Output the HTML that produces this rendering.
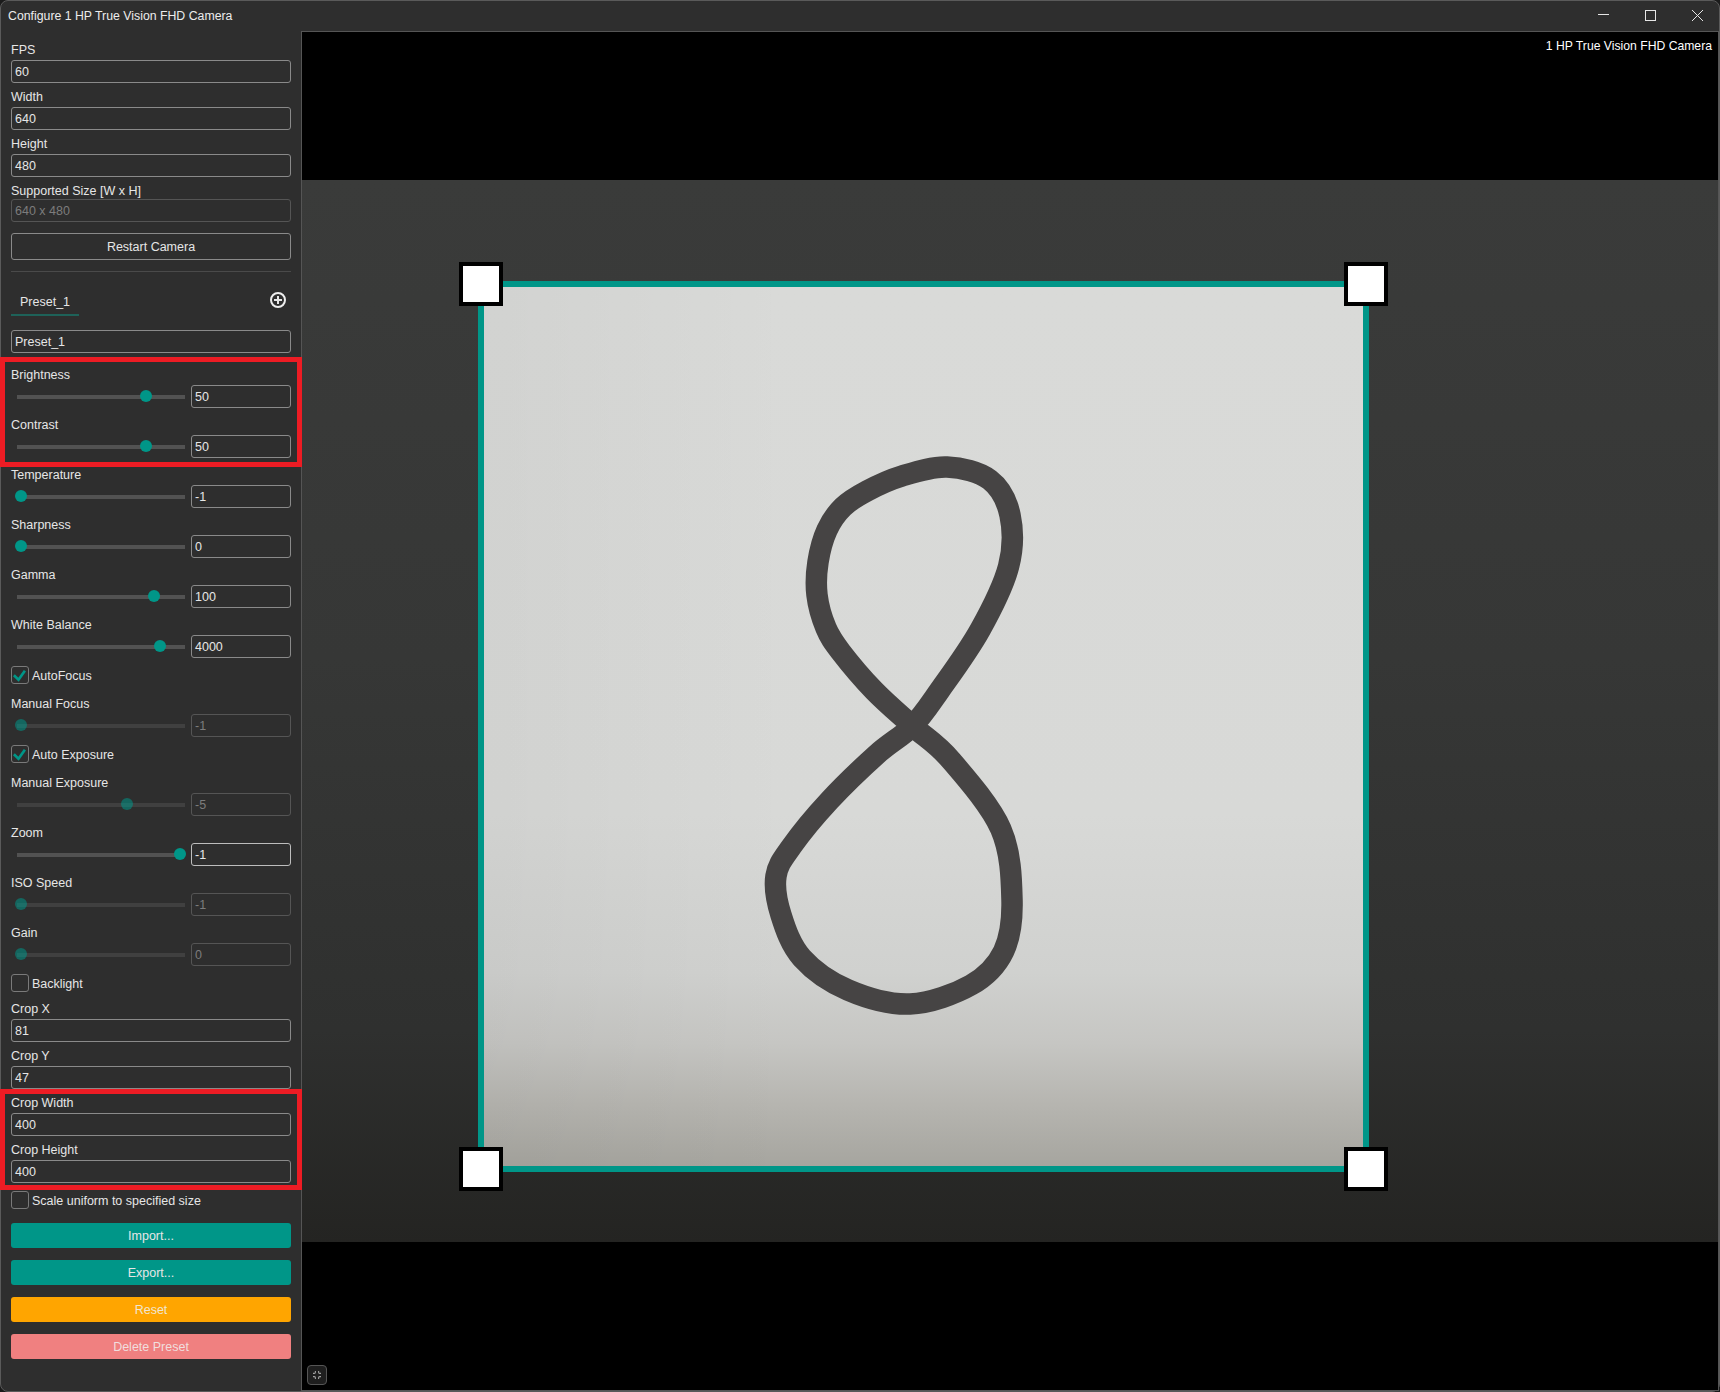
<!DOCTYPE html>
<html><head><meta charset="utf-8"><style>
html,body{margin:0;padding:0;width:1720px;height:1392px;overflow:hidden;background:#1b1b1b;}
body{position:relative;font-family:"Liberation Sans", sans-serif;}
.t{position:absolute;white-space:nowrap;font-family:"Liberation Sans", sans-serif;}
.b{position:absolute;}
</style></head><body>
<div class="b" style="left:0;top:0;width:1720px;height:1392px;background:#2e2e2e;border:1px solid #5a5a5a;border-radius:8px;box-sizing:border-box;overflow:hidden"></div><div class="t" style="left:8px;top:9.59px;font-size:12.3px;line-height:12.3px;color:#ececec;letter-spacing:0px;">Configure 1 HP True Vision FHD Camera</div><svg class="b" style="left:1590px;top:0" width="130" height="31" viewBox="1590 0 130 31"><line x1="1598" y1="14.5" x2="1609" y2="14.5" stroke="#e6e6e6" stroke-width="1"/><rect x="1645.5" y="10.5" width="10" height="10" fill="none" stroke="#e6e6e6" stroke-width="1"/><path d="M1692 10 L1703 21 M1703 10 L1692 21" stroke="#e6e6e6" stroke-width="1"/></svg><div class="b" style="left:301px;top:31px;width:1418px;height:1360px;background:#000;border:1px solid #555;box-sizing:border-box;"></div><svg class="b" style="left:302px;top:180px" width="1416" height="1062" viewBox="302 180 1416 1062">
<defs>
<linearGradient id="bgG" x1="0" y1="0" x2="0" y2="1">
<stop offset="0" stop-color="#3a3b3a"/><stop offset="0.45" stop-color="#363736"/><stop offset="0.8" stop-color="#2f302f"/><stop offset="1" stop-color="#242422"/>
</linearGradient>
<linearGradient id="paperG" x1="0" y1="0" x2="0" y2="1">
<stop offset="0" stop-color="#d9dad8"/><stop offset="0.6" stop-color="#d8d9d7"/><stop offset="0.78" stop-color="#d0d1cf"/><stop offset="0.86" stop-color="#c6c6c3"/><stop offset="0.93" stop-color="#b6b5b0"/><stop offset="1" stop-color="#a6a59f"/>
</linearGradient>
<linearGradient id="paperH" x1="0" y1="0" x2="1" y2="0"><stop offset="0" stop-color="#000" stop-opacity="0.035"/><stop offset="0.35" stop-color="#000" stop-opacity="0"/></linearGradient>
</defs>
<rect x="302" y="180" width="1416" height="1062" fill="url(#bgG)"/>
<rect x="484" y="287" width="879" height="879" fill="url(#paperG)"/>
<rect x="484" y="287" width="879" height="879" fill="url(#paperH)"/>
<path id="eight" d="M912.5,726 C925.3,737.6 936.0,742.8 950.7,760 C965.4,777.2 990.6,805.7 1000.8,829 C1011.0,852.3 1011.5,879.6 1012,900 C1012.5,920.4 1010.4,937.1 1003.6,951.3 C996.8,965.5 986.6,976.2 971,985 C955.4,993.8 930.5,1003.2 910,1004 C889.5,1004.8 866.0,997.7 848,990 C830.0,982.3 813.2,970.5 802,958 C790.8,945.5 785.3,928.7 781,915 C776.7,901.3 774.2,887.4 776,876 C777.8,864.6 782.7,859.0 791.6,846.4 C800.5,833.8 815.3,815.8 829.5,800.5 C843.7,785.2 862.9,766.9 876.7,754.5 C890.5,742.1 902.0,736.7 912.5,726 C923.0,715.3 928.4,706.5 939.6,690.5 C950.9,674.5 968.5,650.7 980,630 C991.5,609.3 1003.6,585.6 1008.6,566.4 C1013.6,547.2 1013.1,529.5 1010,515 C1006.9,500.6 1000.2,487.7 989.7,479.7 C979.2,471.7 961.6,467.6 947,467 C932.4,466.4 915.3,472.0 902,476 C888.7,480.0 876.8,485.8 867,491 C857.2,496.2 849.7,500.5 843,507 C836.3,513.5 831.2,520.8 827,530 C822.8,539.2 819.7,551.2 818,562 C816.3,572.8 815.7,584.0 817,595 C818.3,606.0 822.0,618.5 826,628 C830.0,637.5 832.7,641.3 840.7,651.7 C848.7,662.1 862.0,678.1 874,690.5 C886.0,702.9 899.7,714.4 912.5,726 Z" fill="none" stroke="#464444" stroke-width="21.5" stroke-linejoin="round" stroke-linecap="round"/>
<rect x="481" y="284" width="885" height="885" fill="none" stroke="#009688" stroke-width="6"/>
<rect x="461" y="264" width="40" height="40" fill="#fff" stroke="#000" stroke-width="4"/>
<rect x="1346" y="264" width="40" height="40" fill="#fff" stroke="#000" stroke-width="4"/>
<rect x="461" y="1149" width="40" height="40" fill="#fff" stroke="#000" stroke-width="4"/>
<rect x="1346" y="1149" width="40" height="40" fill="#fff" stroke="#000" stroke-width="4"/>
</svg><div class="t" style="left:1400px;width:312px;text-align:right;top:39.5px;font-size:12.2px;line-height:12px;color:#fff">1 HP True Vision FHD Camera</div><svg class="b" style="left:306px;top:1364px" width="22" height="22" viewBox="0 0 22 22">
<rect x="1.5" y="1.5" width="19" height="19" rx="3.5" fill="#1e1e1e" stroke="#555" stroke-width="1"/>
<path d="M9.4 7 V8.3 Q9.4 9.4 8.3 9.4 H7 M12.6 7 V8.3 Q12.6 9.4 13.7 9.4 H15 M9.4 15 V13.7 Q9.4 12.6 8.3 12.6 H7 M12.6 15 V13.7 Q12.6 12.6 13.7 12.6 H15" fill="none" stroke="#a0a0a0" stroke-width="1.1"/>
</svg><div class="t" style="left:11px;top:44.42px;font-size:12.5px;line-height:12.5px;color:#e6e6e6;letter-spacing:0px;">FPS</div><div class="b" style="left:11px;top:60px;width:280px;height:23px;border:1px solid #8a8a8a;border-radius:3px;box-sizing:border-box;"></div><div class="t" style="left:15px;top:66.42px;font-size:12.5px;line-height:12.5px;color:#e6e6e6;letter-spacing:0px;">60</div><div class="t" style="left:11px;top:91.42px;font-size:12.5px;line-height:12.5px;color:#e6e6e6;letter-spacing:0px;">Width</div><div class="b" style="left:11px;top:107px;width:280px;height:23px;border:1px solid #8a8a8a;border-radius:3px;box-sizing:border-box;"></div><div class="t" style="left:15px;top:113.42px;font-size:12.5px;line-height:12.5px;color:#e6e6e6;letter-spacing:0px;">640</div><div class="t" style="left:11px;top:138.42px;font-size:12.5px;line-height:12.5px;color:#e6e6e6;letter-spacing:0px;">Height</div><div class="b" style="left:11px;top:154px;width:280px;height:23px;border:1px solid #8a8a8a;border-radius:3px;box-sizing:border-box;"></div><div class="t" style="left:15px;top:160.42px;font-size:12.5px;line-height:12.5px;color:#e6e6e6;letter-spacing:0px;">480</div><div class="t" style="left:11px;top:185.42px;font-size:12.5px;line-height:12.5px;color:#e6e6e6;letter-spacing:0px;">Supported Size [W x H]</div><div class="b" style="left:11px;top:199px;width:280px;height:23px;border:1px solid #555555;border-radius:3px;box-sizing:border-box;"></div><div class="t" style="left:15px;top:205.42px;font-size:12.5px;line-height:12.5px;color:#7c7c7c;letter-spacing:0px;">640 x 480</div><div class="b" style="left:11px;top:233px;width:280px;height:27px;background:transparent;border-radius:3px;box-sizing:border-box;border:1px solid #8a8a8a;"></div><div class="t" style="left:11px;width:280px;text-align:center;top:241.42px;font-size:12.5px;line-height:12.5px;color:#e6e6e6;letter-spacing:0px">Restart Camera</div><div class="b" style="left:11px;top:271px;width:280px;height:1px;background:#4a4a4a;"></div><div class="t" style="left:20px;top:296.42px;font-size:12.5px;line-height:12.5px;color:#e6e6e6;letter-spacing:0px;">Preset_1</div><div class="b" style="left:11px;top:314px;width:68px;height:2px;background:#1e6259;"></div><svg class="b" style="left:268px;top:290px" width="20" height="20" viewBox="0 0 20 20"><circle cx="10" cy="10" r="7" fill="none" stroke="#eeeeee" stroke-width="2"/><path d="M10 6 V14 M6 10 H14" stroke="#e6e6e6" stroke-width="2"/></svg><div class="b" style="left:11px;top:330px;width:280px;height:23px;border:1px solid #8a8a8a;border-radius:3px;box-sizing:border-box;"></div><div class="t" style="left:15px;top:336.42px;font-size:12.5px;line-height:12.5px;color:#e6e6e6;letter-spacing:0px;">Preset_1</div><div class="t" style="left:11px;top:369.42px;font-size:12.5px;line-height:12.5px;color:#e6e6e6;letter-spacing:0px;">Brightness</div><div class="b" style="left:17px;top:395px;width:168px;height:4px;background:#525252;"></div><div class="b" style="left:140px;top:390px;width:12px;height:12px;border-radius:50%;background:#009688;"></div><div class="b" style="left:191px;top:385px;width:100px;height:23px;border:1px solid #8a8a8a;border-radius:3px;box-sizing:border-box;"></div><div class="t" style="left:195px;top:391.42px;font-size:12.5px;line-height:12.5px;color:#e6e6e6;letter-spacing:0px;">50</div><div class="t" style="left:11px;top:419.42px;font-size:12.5px;line-height:12.5px;color:#e6e6e6;letter-spacing:0px;">Contrast</div><div class="b" style="left:17px;top:445px;width:168px;height:4px;background:#525252;"></div><div class="b" style="left:140px;top:440px;width:12px;height:12px;border-radius:50%;background:#009688;"></div><div class="b" style="left:191px;top:435px;width:100px;height:23px;border:1px solid #8a8a8a;border-radius:3px;box-sizing:border-box;"></div><div class="t" style="left:195px;top:441.42px;font-size:12.5px;line-height:12.5px;color:#e6e6e6;letter-spacing:0px;">50</div><div class="t" style="left:11px;top:469.42px;font-size:12.5px;line-height:12.5px;color:#e6e6e6;letter-spacing:0px;">Temperature</div><div class="b" style="left:17px;top:495px;width:168px;height:4px;background:#525252;"></div><div class="b" style="left:15px;top:490px;width:12px;height:12px;border-radius:50%;background:#009688;"></div><div class="b" style="left:191px;top:485px;width:100px;height:23px;border:1px solid #8a8a8a;border-radius:3px;box-sizing:border-box;"></div><div class="t" style="left:195px;top:491.42px;font-size:12.5px;line-height:12.5px;color:#e6e6e6;letter-spacing:0px;">-1</div><div class="t" style="left:11px;top:519.42px;font-size:12.5px;line-height:12.5px;color:#e6e6e6;letter-spacing:0px;">Sharpness</div><div class="b" style="left:17px;top:545px;width:168px;height:4px;background:#525252;"></div><div class="b" style="left:15px;top:540px;width:12px;height:12px;border-radius:50%;background:#009688;"></div><div class="b" style="left:191px;top:535px;width:100px;height:23px;border:1px solid #8a8a8a;border-radius:3px;box-sizing:border-box;"></div><div class="t" style="left:195px;top:541.42px;font-size:12.5px;line-height:12.5px;color:#e6e6e6;letter-spacing:0px;">0</div><div class="t" style="left:11px;top:569.42px;font-size:12.5px;line-height:12.5px;color:#e6e6e6;letter-spacing:0px;">Gamma</div><div class="b" style="left:17px;top:595px;width:168px;height:4px;background:#525252;"></div><div class="b" style="left:148px;top:590px;width:12px;height:12px;border-radius:50%;background:#009688;"></div><div class="b" style="left:191px;top:585px;width:100px;height:23px;border:1px solid #8a8a8a;border-radius:3px;box-sizing:border-box;"></div><div class="t" style="left:195px;top:591.42px;font-size:12.5px;line-height:12.5px;color:#e6e6e6;letter-spacing:0px;">100</div><div class="t" style="left:11px;top:619.42px;font-size:12.5px;line-height:12.5px;color:#e6e6e6;letter-spacing:0px;">White Balance</div><div class="b" style="left:17px;top:645px;width:168px;height:4px;background:#525252;"></div><div class="b" style="left:154px;top:640px;width:12px;height:12px;border-radius:50%;background:#009688;"></div><div class="b" style="left:191px;top:635px;width:100px;height:23px;border:1px solid #8a8a8a;border-radius:3px;box-sizing:border-box;"></div><div class="t" style="left:195px;top:641.42px;font-size:12.5px;line-height:12.5px;color:#e6e6e6;letter-spacing:0px;">4000</div><div class="b" style="left:11px;top:666px;width:18px;height:18px;border:1px solid #7a7a7a;border-radius:3px;box-sizing:border-box;"></div><svg class="b" style="left:11px;top:666px" width="18" height="18" viewBox="0 0 18 18"><path d="M2.9 9.3 L7.5 13.7 L13.9 4.8" fill="none" stroke="#009688" stroke-width="2.7"/></svg><div class="t" style="left:32px;top:670.42px;font-size:12.5px;line-height:12.5px;color:#e6e6e6;letter-spacing:0px;">AutoFocus</div><div class="t" style="left:11px;top:698.42px;font-size:12.5px;line-height:12.5px;color:#e6e6e6;letter-spacing:0px;">Manual Focus</div><div class="b" style="left:17px;top:724px;width:168px;height:4px;background:#404040;"></div><div class="b" style="left:15px;top:719px;width:12px;height:12px;border-radius:50%;background:rgba(0,150,136,0.55);"></div><div class="b" style="left:191px;top:714px;width:100px;height:23px;border:1px solid #555555;border-radius:3px;box-sizing:border-box;"></div><div class="t" style="left:195px;top:720.42px;font-size:12.5px;line-height:12.5px;color:#7c7c7c;letter-spacing:0px;">-1</div><div class="b" style="left:11px;top:745px;width:18px;height:18px;border:1px solid #7a7a7a;border-radius:3px;box-sizing:border-box;"></div><svg class="b" style="left:11px;top:745px" width="18" height="18" viewBox="0 0 18 18"><path d="M2.9 9.3 L7.5 13.7 L13.9 4.8" fill="none" stroke="#009688" stroke-width="2.7"/></svg><div class="t" style="left:32px;top:749.42px;font-size:12.5px;line-height:12.5px;color:#e6e6e6;letter-spacing:0px;">Auto Exposure</div><div class="t" style="left:11px;top:777.42px;font-size:12.5px;line-height:12.5px;color:#e6e6e6;letter-spacing:0px;">Manual Exposure</div><div class="b" style="left:17px;top:803px;width:168px;height:4px;background:#404040;"></div><div class="b" style="left:121px;top:798px;width:12px;height:12px;border-radius:50%;background:rgba(0,150,136,0.55);"></div><div class="b" style="left:191px;top:793px;width:100px;height:23px;border:1px solid #555555;border-radius:3px;box-sizing:border-box;"></div><div class="t" style="left:195px;top:799.42px;font-size:12.5px;line-height:12.5px;color:#7c7c7c;letter-spacing:0px;">-5</div><div class="t" style="left:11px;top:827.42px;font-size:12.5px;line-height:12.5px;color:#e6e6e6;letter-spacing:0px;">Zoom</div><div class="b" style="left:17px;top:853px;width:168px;height:4px;background:#525252;"></div><div class="b" style="left:174px;top:848px;width:12px;height:12px;border-radius:50%;background:#009688;"></div><div class="b" style="left:191px;top:843px;width:100px;height:23px;border:1px solid #bdbdbd;border-radius:3px;box-sizing:border-box;"></div><div class="t" style="left:195px;top:849.42px;font-size:12.5px;line-height:12.5px;color:#e6e6e6;letter-spacing:0px;">-1</div><div class="t" style="left:11px;top:877.42px;font-size:12.5px;line-height:12.5px;color:#e6e6e6;letter-spacing:0px;">ISO Speed</div><div class="b" style="left:17px;top:903px;width:168px;height:4px;background:#404040;"></div><div class="b" style="left:15px;top:898px;width:12px;height:12px;border-radius:50%;background:rgba(0,150,136,0.55);"></div><div class="b" style="left:191px;top:893px;width:100px;height:23px;border:1px solid #555555;border-radius:3px;box-sizing:border-box;"></div><div class="t" style="left:195px;top:899.42px;font-size:12.5px;line-height:12.5px;color:#7c7c7c;letter-spacing:0px;">-1</div><div class="t" style="left:11px;top:927.42px;font-size:12.5px;line-height:12.5px;color:#e6e6e6;letter-spacing:0px;">Gain</div><div class="b" style="left:17px;top:953px;width:168px;height:4px;background:#404040;"></div><div class="b" style="left:15px;top:948px;width:12px;height:12px;border-radius:50%;background:rgba(0,150,136,0.55);"></div><div class="b" style="left:191px;top:943px;width:100px;height:23px;border:1px solid #555555;border-radius:3px;box-sizing:border-box;"></div><div class="t" style="left:195px;top:949.42px;font-size:12.5px;line-height:12.5px;color:#7c7c7c;letter-spacing:0px;">0</div><div class="b" style="left:11px;top:974px;width:18px;height:18px;border:1px solid #7a7a7a;border-radius:3px;box-sizing:border-box;"></div><div class="t" style="left:32px;top:978.42px;font-size:12.5px;line-height:12.5px;color:#e6e6e6;letter-spacing:0px;">Backlight</div><div class="t" style="left:11px;top:1003.42px;font-size:12.5px;line-height:12.5px;color:#e6e6e6;letter-spacing:0px;">Crop X</div><div class="b" style="left:11px;top:1019px;width:280px;height:23px;border:1px solid #8a8a8a;border-radius:3px;box-sizing:border-box;"></div><div class="t" style="left:15px;top:1025.42px;font-size:12.5px;line-height:12.5px;color:#e6e6e6;letter-spacing:0px;">81</div><div class="t" style="left:11px;top:1050.42px;font-size:12.5px;line-height:12.5px;color:#e6e6e6;letter-spacing:0px;">Crop Y</div><div class="b" style="left:11px;top:1066px;width:280px;height:23px;border:1px solid #8a8a8a;border-radius:3px;box-sizing:border-box;"></div><div class="t" style="left:15px;top:1072.42px;font-size:12.5px;line-height:12.5px;color:#e6e6e6;letter-spacing:0px;">47</div><div class="t" style="left:11px;top:1097.42px;font-size:12.5px;line-height:12.5px;color:#e6e6e6;letter-spacing:0px;">Crop Width</div><div class="b" style="left:11px;top:1113px;width:280px;height:23px;border:1px solid #8a8a8a;border-radius:3px;box-sizing:border-box;"></div><div class="t" style="left:15px;top:1119.42px;font-size:12.5px;line-height:12.5px;color:#e6e6e6;letter-spacing:0px;">400</div><div class="t" style="left:11px;top:1144.42px;font-size:12.5px;line-height:12.5px;color:#e6e6e6;letter-spacing:0px;">Crop Height</div><div class="b" style="left:11px;top:1160px;width:280px;height:23px;border:1px solid #8a8a8a;border-radius:3px;box-sizing:border-box;"></div><div class="t" style="left:15px;top:1166.42px;font-size:12.5px;line-height:12.5px;color:#e6e6e6;letter-spacing:0px;">400</div><div class="b" style="left:11px;top:1191px;width:18px;height:18px;border:1px solid #7a7a7a;border-radius:3px;box-sizing:border-box;"></div><div class="t" style="left:32px;top:1195.42px;font-size:12.5px;line-height:12.5px;color:#e6e6e6;letter-spacing:0px;">Scale uniform to specified size</div><div class="b" style="left:11px;top:1223px;width:280px;height:25px;background:#009688;border-radius:3px;box-sizing:border-box;"></div><div class="t" style="left:11px;width:280px;text-align:center;top:1230.42px;font-size:12.5px;line-height:12.5px;color:#e6e6e6;letter-spacing:0px">Import...</div><div class="b" style="left:11px;top:1260px;width:280px;height:25px;background:#009688;border-radius:3px;box-sizing:border-box;"></div><div class="t" style="left:11px;width:280px;text-align:center;top:1267.42px;font-size:12.5px;line-height:12.5px;color:#e6e6e6;letter-spacing:0px">Export...</div><div class="b" style="left:11px;top:1297px;width:280px;height:25px;background:#ffa500;border-radius:3px;box-sizing:border-box;"></div><div class="t" style="left:11px;width:280px;text-align:center;top:1304.42px;font-size:12.5px;line-height:12.5px;color:#f0e6d2;letter-spacing:0px">Reset</div><div class="b" style="left:11px;top:1334px;width:280px;height:25px;background:#f08080;border-radius:3px;box-sizing:border-box;"></div><div class="t" style="left:11px;width:280px;text-align:center;top:1341.42px;font-size:12.5px;line-height:12.5px;color:#f0dede;letter-spacing:0px">Delete Preset</div><div class="b" style="left:0px;top:357px;width:302px;height:110px;border:5px solid #ed1c24;box-sizing:border-box;"></div><div class="b" style="left:0px;top:1089px;width:302px;height:101px;border:5px solid #ed1c24;box-sizing:border-box;"></div>
</body></html>
